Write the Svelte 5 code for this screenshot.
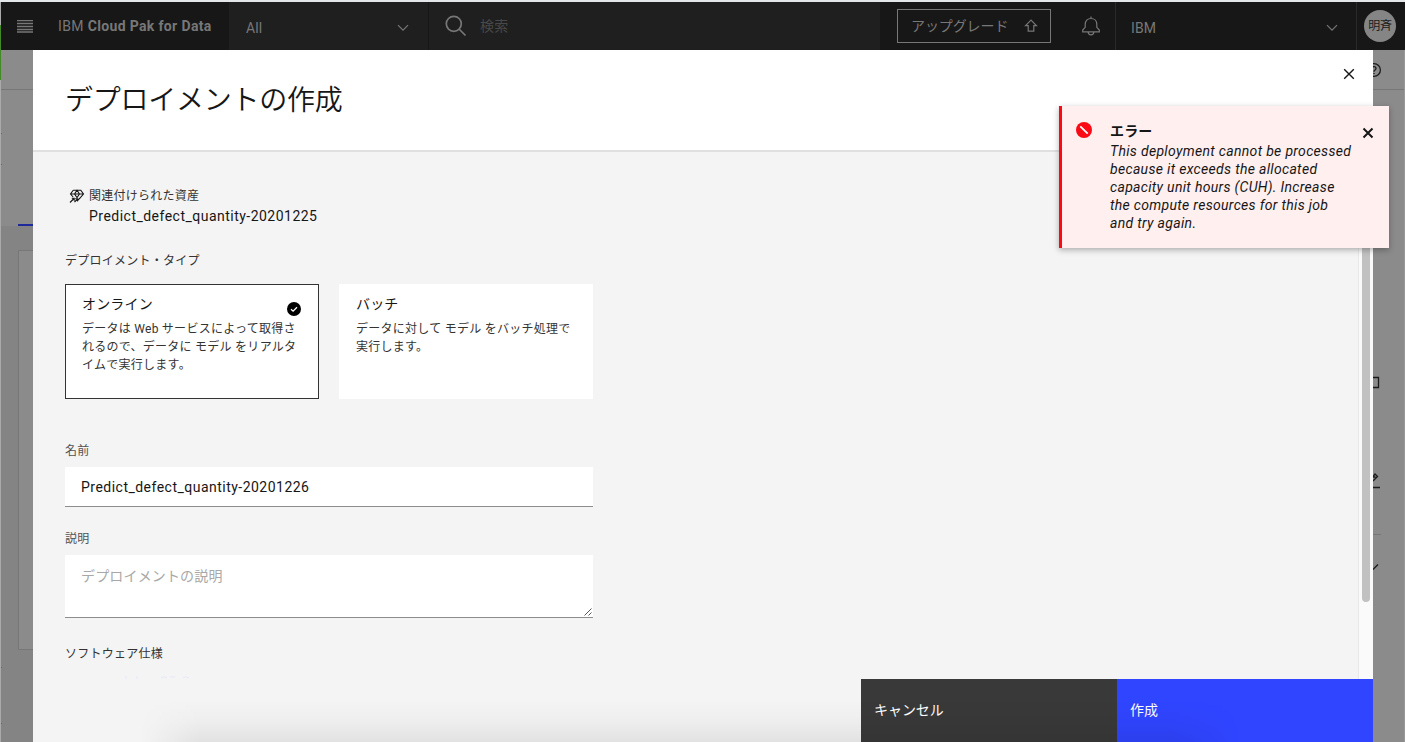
<script lang="ts">
  let deploymentType = $state('online');
  let name = $state('Predict_defect_quantity-20201226');
  let description = $state('');

  const types = [
    {
      id: 'online',
      title: 'オンライン',
      lines: ['データは Web サービスによって取得さ', 'れるので、データに モデル をリアルタ', 'イムで実行します。']
    },
    {
      id: 'batch',
      title: 'バッチ',
      lines: ['データに対して モデル をバッチ処理で', '実行します。']
    }
  ];

  const errorLines = [
    'This deployment cannot be processed',
    'because it exceeds the allocated',
    'capacity unit hours (CUH). Increase',
    'the compute resources for this job',
    'and try again.'
  ];
</script>

<div class="page">
  <div class="window-edge"></div>
  <header class="topbar">
    <div class="brand">
      <svg class="menu" width="16" height="13" viewBox="0 0 16 13">
        <path d="M0 .5h16M0 3.5h16M0 6.5h16M0 9.5h16M0 12h16" />
      </svg>
      <span class="product">IBM <b>Cloud Pak for Data</b></span>
    </div>
    <div class="scope">
      <span>All</span>
      <svg class="chevron" width="12" height="8" viewBox="0 0 12 8"><path d="M1 1.2l5 5 5-5" /></svg>
    </div>
    <div class="search">
      <svg width="22" height="22" viewBox="0 0 22 22"><circle cx="8.8" cy="8.8" r="7.5" /><path d="M14 14l6.5 6.5" /></svg>
      <span>検索</span>
    </div>
    <div class="upgrade">
      <button>
        <span>アップグレード</span>
        <svg width="14" height="14" viewBox="0 0 14 14"><path d="M7 1.2L1.6 6.6h2.6v5.6h5.6V6.6h2.6z" /></svg>
      </button>
    </div>
    <div class="bell">
      <svg width="20" height="20" viewBox="0 0 20 20">
        <path d="M10 .5v2M10 2.5c-3.6 0-5.8 2.500-5.800 5.800v3L1.700 14v1.900h16.600V14l-2.500-2.700v-3c0-3.300-2.200-5.800-5.800-5.800zM7.200 16c0 1.700 1.200 2.800 2.800 2.800s2.800-1.100 2.800-2.800" />
      </svg>
    </div>
    <div class="account">
      <span>IBM</span>
      <svg class="chevron" width="12" height="8" viewBox="0 0 12 8"><path d="M1 1.2l5 5 5-5" /></svg>
    </div>
    <div class="user"><span class="avatar">明斉</span></div>
  </header>

  <!-- what stays visible of the dimmed page -->
  <svg class="behind-left" width="33" height="692" viewBox="0 0 33 692">
    <rect x="1" width="32" height="176" fill="#8b8b8b" />
    <rect x="1" y="176" width="32" height="516" fill="#848484" />
    <path d="M1 39.5h32" stroke="#777" />
    <path d="M18 175h15" stroke="#1d2a9c" stroke-width="2" />
    <path d="M33 200.500H18.500V599.500H33" fill="#8b8b8b" stroke="#777" />
    <path d="M0 83.500h2M0 114.500h2M0 617.500h2M0 673.500h2" stroke="#666" />
  </svg>
  <svg class="behind-right" width="32" height="692" viewBox="0 0 32 692">
    <path d="M0 39.500h32M0 484.500h8" stroke="#777" fill="none" />
    <g fill="none" stroke="#1c1c1c" stroke-width="1.3">
      <circle cx="1" cy="20" r="6.400" />
      <path d="M-1 18.500c0-2.500 4-2.500 4 0 0 1.500-2 1.500-2 3.200M1 23v1" />
      <path d="M0 327.500h5.500v10H0" />
      <path d="M0 426.500l2-2.500 2.500 2.500-4.500 4.500M0 427h2.500M0 437.500h7" />
      <path d="M0 519.500l5-5" />
    </g>
    <path d="M31.500 0v692" stroke="#999" />
  </svg>

  <section class="dialog">
    <div class="dialog-header">
      <h1>デプロイメントの作成</h1>
      <button class="close" aria-label="閉じる">
        <svg width="12" height="12" viewBox="0 0 12 12"><path d="M1.200 1.200l9.600 9.600M10.800 1.200l-9.600 9.600" /></svg>
      </button>
    </div>

    <div class="dialog-body">
      <div class="form">
        <div class="asset">
          <svg width="16" height="16" viewBox="0 0 16 16">
            <path d="M4.200 2.200h7.600L14.500 6l-4 4.500L8 13M4.200 2.200L1.500 6l2.600 3M1.500 6h13M5.500 6L8 2.200 10.500 6 8 9.500z" />
            <path d="M1 14.500l4-4M2.800 10.300H5.200v2.500M5.500 14l2.700-2.700M6.200 10.800h2.300v2.500" />
          </svg>
          <div>
            <div class="asset-label">関連付けられた資産</div>
            <div class="asset-name">Predict_defect_quantity-20201225</div>
          </div>
        </div>

        <div class="label">デプロイメント・タイプ</div>
        <div class="tiles">
          {#each types as type}
            <button class="tile" class:selected={deploymentType === type.id} onclick={() => (deploymentType = type.id)}>
              <span class="tile-title">{type.title}</span>
              {#each type.lines as line}
                <span class="tile-line">{line}</span>
              {/each}
              {#if deploymentType === type.id}
                <svg class="check" width="14" height="14" viewBox="0 0 14 14">
                  <circle cx="7" cy="7" r="7" /><path d="M4 7.200l2.100 2L10 5.200" />
                </svg>
              {/if}
            </button>
          {/each}
        </div>

        <label class="field-label" for="name">名前</label>
        <input id="name" bind:value={name} spellcheck="false" />

        <label class="field-label second" for="description">説明</label>
        <div class="area">
          <textarea id="description" placeholder="デプロイメントの説明" bind:value={description}></textarea>
          <svg class="grip" width="8" height="8" viewBox="0 0 8 8"><path d="M.5 7.500l7-7M4.500 7.500l3-3" /></svg>
        </div>

        <div class="label software">ソフトウェア仕様</div>
        <!-- next value, almost gone under the fade -->
        <svg class="faded" width="70" height="3" viewBox="0 0 70 3">
          <path d="M2 0v3M13 0v3M37 2q3-2.500 6 0M46 1h5M59 2q3-2.500 6 0" />
        </svg>
      </div>
      <div class="scrollbar"><div class="thumb"></div></div>
    </div>

    <div class="actions">
      <button class="cancel">キャンセル</button>
      <button class="create">作成</button>
    </div>
  </section>

  <div class="dock-shadow"></div>

  <aside class="toast" role="alert">
    <svg class="error-icon" width="16" height="16" viewBox="0 0 16 16"><circle cx="8" cy="8" r="8" /><path d="M4.300 4.300l7.400 7.400" /></svg>
    <div class="toast-text">
      <strong>エラー</strong>
      {#each errorLines as line}
        <em>{line}</em>
      {/each}
    </div>
    <svg class="toast-close" width="12" height="12" viewBox="0 0 12 12"><path d="M1.500 1.500l9 9M10.500 1.500l-9 9" /></svg>
  </aside>
</div>

<style>
  :global(body) {
    margin: 0;
    overflow: hidden;
  }

  .page {
    position: relative;
    width: 1405px;
    height: 742px;
    overflow: hidden;
    background: #8b8b8b;
    border-top: 2px solid #e4e7e9;
    box-sizing: border-box;
    font-family: Roboto, "Noto Sans CJK JP", sans-serif;
    font-size: 14px;
    letter-spacing: 0.16px;
    color: #161616;
  }

  button {
    font: inherit;
    letter-spacing: inherit;
    color: inherit;
    border: 0;
    padding: 0;
    margin: 0;
    background: none;
    text-align: left;
  }

  svg {
    display: block;
    flex: none;
  }

  .window-edge {
    position: absolute;
    left: 0;
    top: 0;
    width: 1px;
    height: 740px;
    background: linear-gradient(#aaa 23px, #438a26 23px, #438a26 78px, #aaa 78px);
    z-index: 2;
  }

  .topbar {
    display: flex;
    height: 48px;
    margin-left: 1px;
    background: #171717;
    color: #777;
  }

  .topbar svg {
    fill: none;
    stroke: #777;
    stroke-width: 1.2;
  }

  .brand {
    display: flex;
    align-items: center;
    width: 228px;
    padding-left: 16px;
    box-sizing: border-box;
  }

  .topbar .menu {
    stroke-width: 1.3;
  }

  .product {
    margin-left: 25px;
    letter-spacing: 0.35px;
    white-space: nowrap;
  }

  .product b {
    font-weight: 700;
  }

  .scope {
    display: flex;
    align-items: center;
    justify-content: space-between;
    width: 200px;
    padding: 3px 19px 0 17px;
    box-sizing: border-box;
    background: #1f1f1f;
    border-right: 1px solid #171717;
  }

  .search {
    display: flex;
    align-items: center;
    gap: 13px;
    width: 451px;
    padding-left: 16px;
    box-sizing: border-box;
    background: #1f1f1f;
    color: #484848;
  }

  .search svg {
    stroke-width: 1.7;
  }

  .search span {
    padding-bottom: 2px;
  }

  .upgrade {
    padding: 7px 0 0 17px;
  }

  .upgrade button {
    display: flex;
    align-items: center;
    justify-content: space-between;
    width: 154px;
    height: 34px;
    box-sizing: border-box;
    border: 1px solid #777;
    padding: 0 12px 0 13px;
    letter-spacing: -0.1px;
  }

  .upgrade span {
    padding-bottom: 2px;
  }

  .bell {
    display: flex;
    align-items: center;
    justify-content: center;
    width: 64px;
    padding-left: 16px;
    box-sizing: border-box;
  }

  .account {
    display: flex;
    align-items: center;
    justify-content: space-between;
    width: 242px;
    padding: 3px 18px 0 15px;
    box-sizing: border-box;
    border-left: 1px solid #292929;
    border-right: 1px solid #292929;
  }

  .user {
    padding: 8px 0 0 7px;
  }

  .avatar {
    display: block;
    width: 32px;
    height: 32px;
    border-radius: 50%;
    background: #858585;
    color: #1b1b1b;
    font-size: 12px;
    line-height: 32px;
    text-align: center;
    letter-spacing: -0.2px;
  }

  .behind-left {
    position: absolute;
    left: 0;
    top: 48px;
  }

  .behind-right {
    position: absolute;
    right: 0;
    top: 48px;
  }

  .dialog {
    position: absolute;
    left: 33px;
    top: 48px;
    width: 1340px;
    height: 692px;
    display: flex;
    flex-direction: column;
    background: #f4f4f4;
  }

  .dialog-header {
    display: flex;
    justify-content: space-between;
    height: 102px;
    padding: 0 18px 0 32px;
    box-sizing: border-box;
    background: #fff;
    border-bottom: 2px solid #e0e0e0;
  }

  h1 {
    margin: 28px 0 0;
    font-family: "Noto Sans CJK JP", sans-serif;
    font-size: 28px;
    font-weight: 350;
    line-height: 40px;
    letter-spacing: -0.25px;
  }

  .close {
    height: 12px;
    margin-top: 18px;
  }

  .close svg {
    stroke: #161616;
    stroke-width: 1.4;
  }

  .dialog-body {
    display: flex;
    justify-content: space-between;
    height: 527px;
    overflow: hidden;
  }

  .form {
    width: 528px;
    padding: 35px 0 0 32px;
  }

  .asset {
    display: flex;
    gap: 4px;
    padding-left: 4px;
  }

  .asset svg {
    margin-top: 1px;
    fill: none;
    stroke: #161616;
    stroke-width: 1.1;
  }

  .asset-label,
  .label,
  .field-label {
    font-size: 12px;
    letter-spacing: 0.26px;
    line-height: 18px;
    color: #333;
  }

  .asset-name {
    line-height: 22px;
    letter-spacing: 0.48px;
  }

  .label {
    margin-top: 25px;
  }

  .tiles {
    display: flex;
    gap: 20px;
    margin-top: 14px;
  }

  .tile {
    position: relative;
    width: 254px;
    height: 115px;
    box-sizing: border-box;
    border: 1px solid transparent;
    background: #fff;
    padding: 9px 0 0 16px;
    display: flex;
    flex-direction: column;
  }

  .tile.selected {
    border-color: #333;
  }

  .tile-title {
    line-height: 20px;
    margin-bottom: 6px;
  }

  .tile-line {
    font-size: 12px;
    line-height: 18px;
    letter-spacing: 0.26px;
    white-space: nowrap;
    color: #333;
  }

  .check {
    position: absolute;
    right: 17px;
    top: 17px;
  }

  .check path {
    fill: none;
    stroke: #fff;
    stroke-width: 1.3;
  }

  .field-label {
    display: block;
    margin-top: 43px;
    margin-bottom: 7px;
    color: #525252;
  }

  .field-label.second {
    margin-top: 23px;
  }

  input,
  textarea {
    display: block;
    width: 528px;
    box-sizing: border-box;
    border: 0;
    border-bottom: 1px solid #8d8d8d;
    border-radius: 0;
    background: #fff;
    color: #161616;
    font: inherit;
    letter-spacing: 0.48px;
    outline: none;
  }

  input {
    height: 40px;
    padding: 0 16px;
  }

  textarea {
    height: 63px;
    padding: 11px 16px 9px;
    resize: none;
    line-height: 20px;
    letter-spacing: 0.16px;
  }

  textarea::placeholder {
    color: #a8a8a8;
  }

  .area {
    position: relative;
  }

  .grip {
    position: absolute;
    right: 1px;
    bottom: 2px;
    fill: none;
    stroke: #444;
    stroke-width: 0.9;
  }

  .label.software {
    margin-top: 27px;
  }

  .faded {
    margin: 13px 0 0 59px;
    fill: none;
    stroke: #e6e7fb;
  }

  .scrollbar {
    width: 15px;
    box-sizing: border-box;
    border-left: 1px solid #e8e8e8;
    background: #fafafa;
    padding-left: 3px;
  }

  .thumb {
    width: 8px;
    height: 450px;
    border-radius: 0 0 4px 4px;
    background: #c1c1c1;
  }

  .actions {
    display: flex;
    justify-content: flex-end;
    height: 63px;
  }

  .actions button {
    width: 256px;
    color: #fff;
    padding: 0 0 3px 13px;
    letter-spacing: -0.05px;
  }

  .cancel {
    background: #393939;
  }

  .create {
    background: #3045ff;
  }

  .dock-shadow {
    position: absolute;
    left: 140px;
    top: 698px;
    width: 1100px;
    height: 42px;
    background: linear-gradient(rgba(0, 0, 0, 0), rgba(0, 0, 0, 0.025) 50%, rgba(0, 0, 0, 0.07));
    -webkit-mask-image: linear-gradient(90deg, transparent, #000 60px, #000 1030px, transparent);
    mask-image: linear-gradient(90deg, transparent, #000 60px, #000 1030px, transparent);
  }

  .toast {
    position: absolute;
    left: 1059px;
    top: 104px;
    width: 330px;
    height: 142px;
    box-sizing: border-box;
    display: flex;
    padding: 16px 15px 0 14px;
    border-left: 3px solid #fa0a14;
    background: #ffefef;
    box-shadow: 0 2px 6px rgba(0, 0, 0, 0.3);
  }

  .error-icon {
    fill: #fa0a14;
  }

  .error-icon path {
    stroke: #fff;
    stroke-width: 1.8;
  }

  .toast-text {
    display: flex;
    flex-direction: column;
    flex: 1;
    margin-left: 18px;
    line-height: 18px;
  }

  .toast-text strong {
    line-height: 18px;
    height: 20px;
    font-weight: 600;
  }

  .toast-text em {
    font-weight: 450;
    letter-spacing: 0.32px;
    white-space: nowrap;
  }

  .toast-close {
    margin-top: 5px;
    stroke: #161616;
    stroke-width: 2;
  }
</style>
